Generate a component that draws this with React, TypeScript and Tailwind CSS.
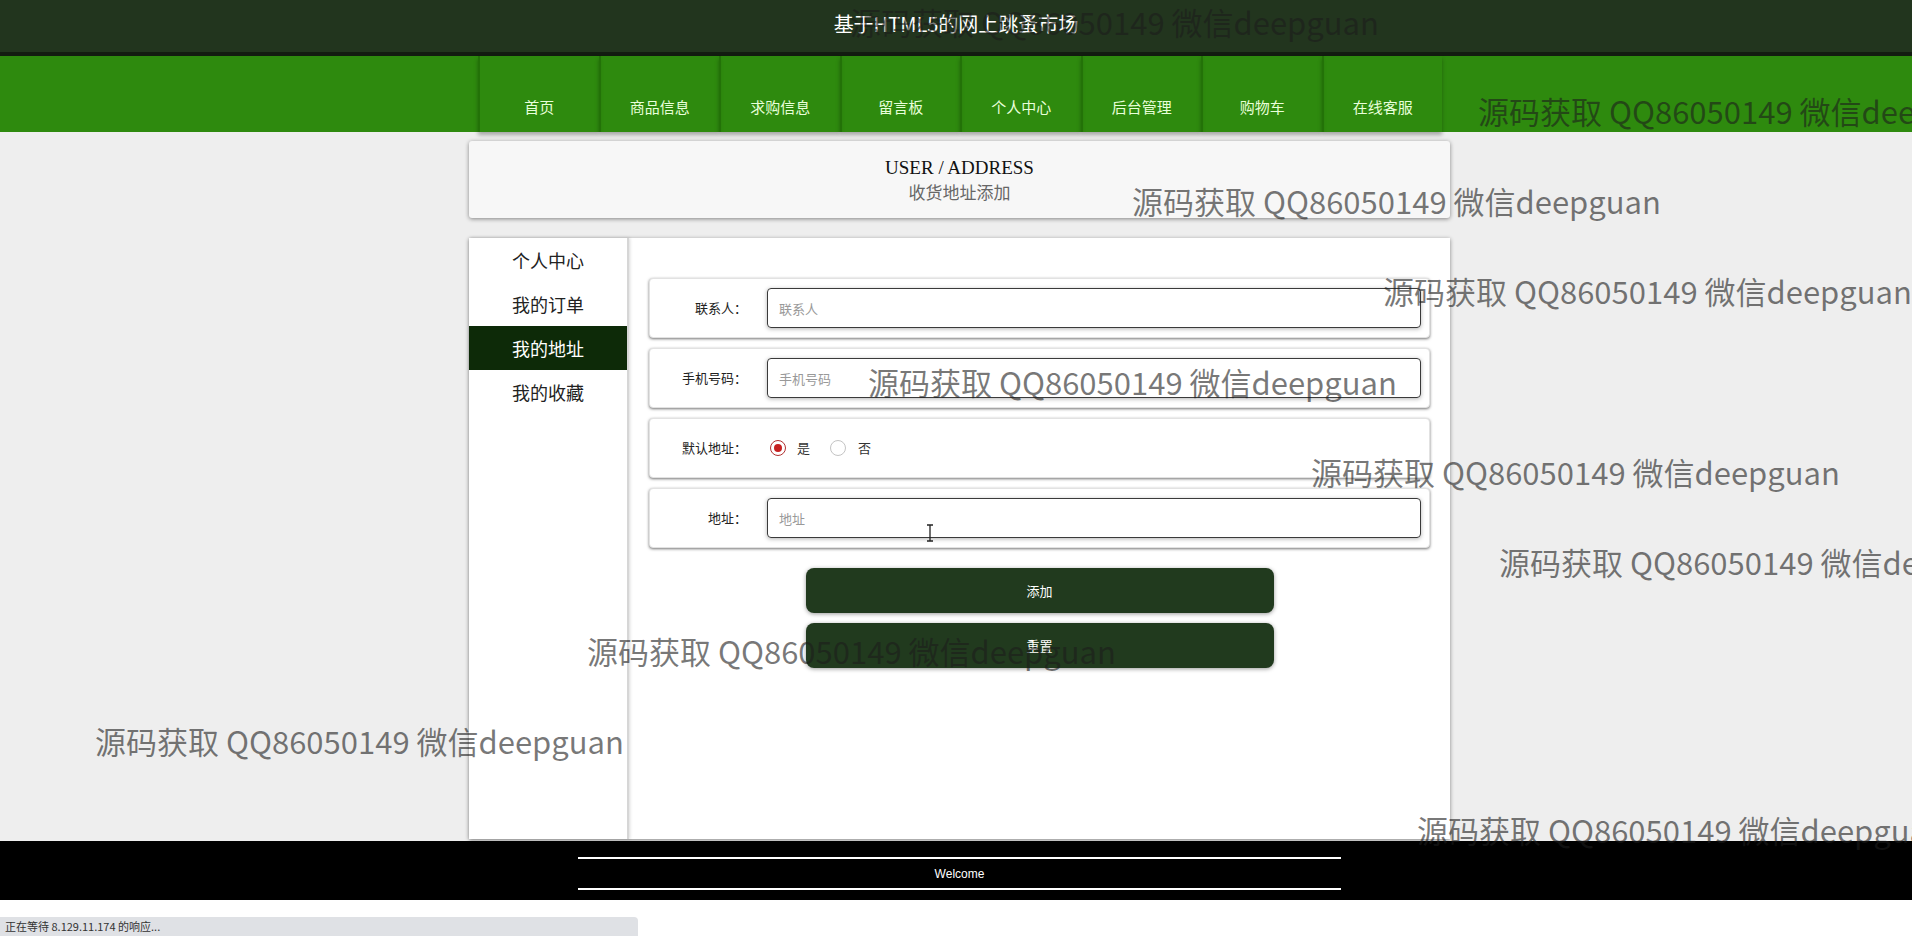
import React from 'react'

const navItems = ['首页', '商品信息', '求购信息', '留言板', '个人中心', '后台管理', '购物车', '在线客服']
const sideItems = ['个人中心', '我的订单', '我的地址', '我的收藏']

const cjk = "font-['Microsoft_YaHei','Noto_Sans_CJK_SC','Noto_Sans',sans-serif]"

const marks = [
  'left-[850px] top-[6px]',
  'left-[1478px] top-[95px]',
  'left-[1132px] top-[185px]',
  'left-[1383px] top-[275px]',
  'left-[868px] top-[366px]',
  'left-[1311px] top-[456px]',
  'left-[1499px] top-[546px]',
  'left-[587px] top-[635px]',
  'left-[95px] top-[725px]',
  'left-[1417px] top-[814px]',
]

const FormRow = ({ label, children }: { label: string; children: React.ReactNode }) => (
  <div className="flex items-center h-[60px] bg-white rounded-[4px] border border-[#e2e2e2] shadow-[0_1px_3px_rgba(0,0,0,0.55)] pr-[8px]">
    <label className="w-[97px] text-right text-[13px] text-[#222]">{label}：</label>
    <div className="flex-1 ml-[20px]">{children}</div>
  </div>
)

const TextInput = ({ placeholder }: { placeholder: string }) => (
  <input
    placeholder={placeholder}
    className="w-full h-[40px] px-[11px] text-[13px] rounded-[4px] border border-[#3a3a3a] shadow-[0_1px_4px_rgba(0,0,0,0.3)] placeholder:text-[#999] outline-none"
  />
)

const App = () => {
  return (
    <div className={`relative w-full min-h-[936px] bg-white overflow-hidden ${cjk}`}>
      {/* 顶部标题 */}
      <div className="h-[56px] bg-[#22351e] border-b-4 border-[#131c11] flex items-center justify-center">
        <h1 className="text-[20px] text-white -mt-[4px]">基于HTML5的网上跳蚤市场</h1>
      </div>

      {/* 导航 */}
      <div className="h-[76px] bg-[#2e8a0e]">
        <div className="ml-[478px] flex h-full">
          {navItems.map((item) => (
            <div
              key={item}
              className="w-[120.5px] h-full flex items-end justify-center pb-[14px] border-l-2 border-[#237208] shadow-[0_3px_4px_rgba(0,0,0,0.3)] text-[15px] text-[#e8ffd9]"
            >
              {item}
            </div>
          ))}
        </div>
      </div>

      {/* 内容 */}
      <div className="bg-[#eeeeee] pt-[9px] pb-[2px]">
        <div className="ml-[469px] w-[981px]">
          <div className="h-[77px] bg-[#f7f7f7] rounded-[3px] shadow-[0_1px_4px_rgba(0,0,0,0.45)] flex flex-col items-center justify-center">
            <div className="text-[19px] leading-[24px] text-[#111] font-['Liberation_Serif',serif]">USER / ADDRESS</div>
            <div className="text-[17px] leading-[24px] text-[#666] font-['Noto_Sans_CJK_SC',serif]">收货地址添加</div>
          </div>

          <div className="mt-[20px] h-[601px] bg-white shadow-[0_1px_4px_rgba(0,0,0,0.45)] flex">
            <div className="w-[160px] border-r-2 border-[#d6d6d6] shadow-[1px_0_3px_rgba(0,0,0,0.15)]">
              {sideItems.map((item) => (
                <div
                  key={item}
                  className={`h-[44px] flex items-center justify-center text-[18px] ${item === '我的地址' ? 'bg-[#0d2a08] text-white' : 'text-[#222]'}`}
                >
                  {item}
                </div>
              ))}
            </div>

            <div className="flex-1 px-[20px] pt-[40px]">
              <div className="flex flex-col gap-[10px]">
                <FormRow label="联系人">
                  <TextInput placeholder="联系人" />
                </FormRow>
                <FormRow label="手机号码">
                  <TextInput placeholder="手机号码" />
                </FormRow>
                <FormRow label="默认地址">
                  <div className="flex items-center text-[13px] text-[#333]">
                    <span className="w-[16px] h-[16px] ml-[3px] rounded-full border border-[#b03030] flex items-center justify-center">
                      <span className="w-[8px] h-[8px] rounded-full bg-[#c62020]" />
                    </span>
                    <span className="ml-[11px]">是</span>
                    <span className="w-[16px] h-[16px] ml-[20px] rounded-full border border-[#c4c4c4]" />
                    <span className="ml-[12px]">否</span>
                  </div>
                </FormRow>
                <FormRow label="地址">
                  <TextInput placeholder="地址" />
                </FormRow>
              </div>

              <div className="flex flex-col items-center gap-[10px] mt-[20px]">
                <button className="w-[468px] h-[45px] rounded-[8px] bg-[#213a1e] text-white text-[13px] shadow-[0_1px_4px_rgba(0,0,0,0.4)]">添加</button>
                <button className="w-[468px] h-[45px] rounded-[8px] bg-[#213a1e] text-white text-[13px] shadow-[0_1px_4px_rgba(0,0,0,0.4)]">重置</button>
              </div>
            </div>
          </div>
        </div>
      </div>

      {/* 底部 */}
      <div className="h-[59px] bg-black pt-[16px]">
        <div className="ml-[578px] w-[763px] h-[33px] border-t-2 border-b-2 border-white flex items-center justify-center text-[12px] text-white font-['Liberation_Sans',sans-serif]">
          Welcome
        </div>
      </div>
      <div className="h-[36px] bg-white" />

      {/* 浏览器状态栏 */}
      <div className="absolute left-0 bottom-0 w-[638px] h-[19px] bg-[#dfe1e5] rounded-tr-[4px] px-[5px] text-[11px] leading-[19px] text-[#333]">
        正在等待 8.129.11.174 的响应...
      </div>

      {/* 鼠标光标 */}
      <svg className="absolute left-[925px] top-[524px]" width="10" height="18" viewBox="0 0 10 18">
        <path d="M2 1h6M5 1v16M2 17h6" stroke="#222" strokeWidth="1.3" fill="none" />
      </svg>

      {/* 水印 */}
      {marks.map((pos) => (
        <div
          key={pos}
          className={`absolute ${pos} whitespace-nowrap pointer-events-none text-[31px] leading-none text-[rgba(28,28,28,0.6)] font-['Noto_Sans_CJK_SC',sans-serif]`}
        >
          源码获取 QQ86050149 微信deepguan
        </div>
      ))}
    </div>
  )
}

export default App
